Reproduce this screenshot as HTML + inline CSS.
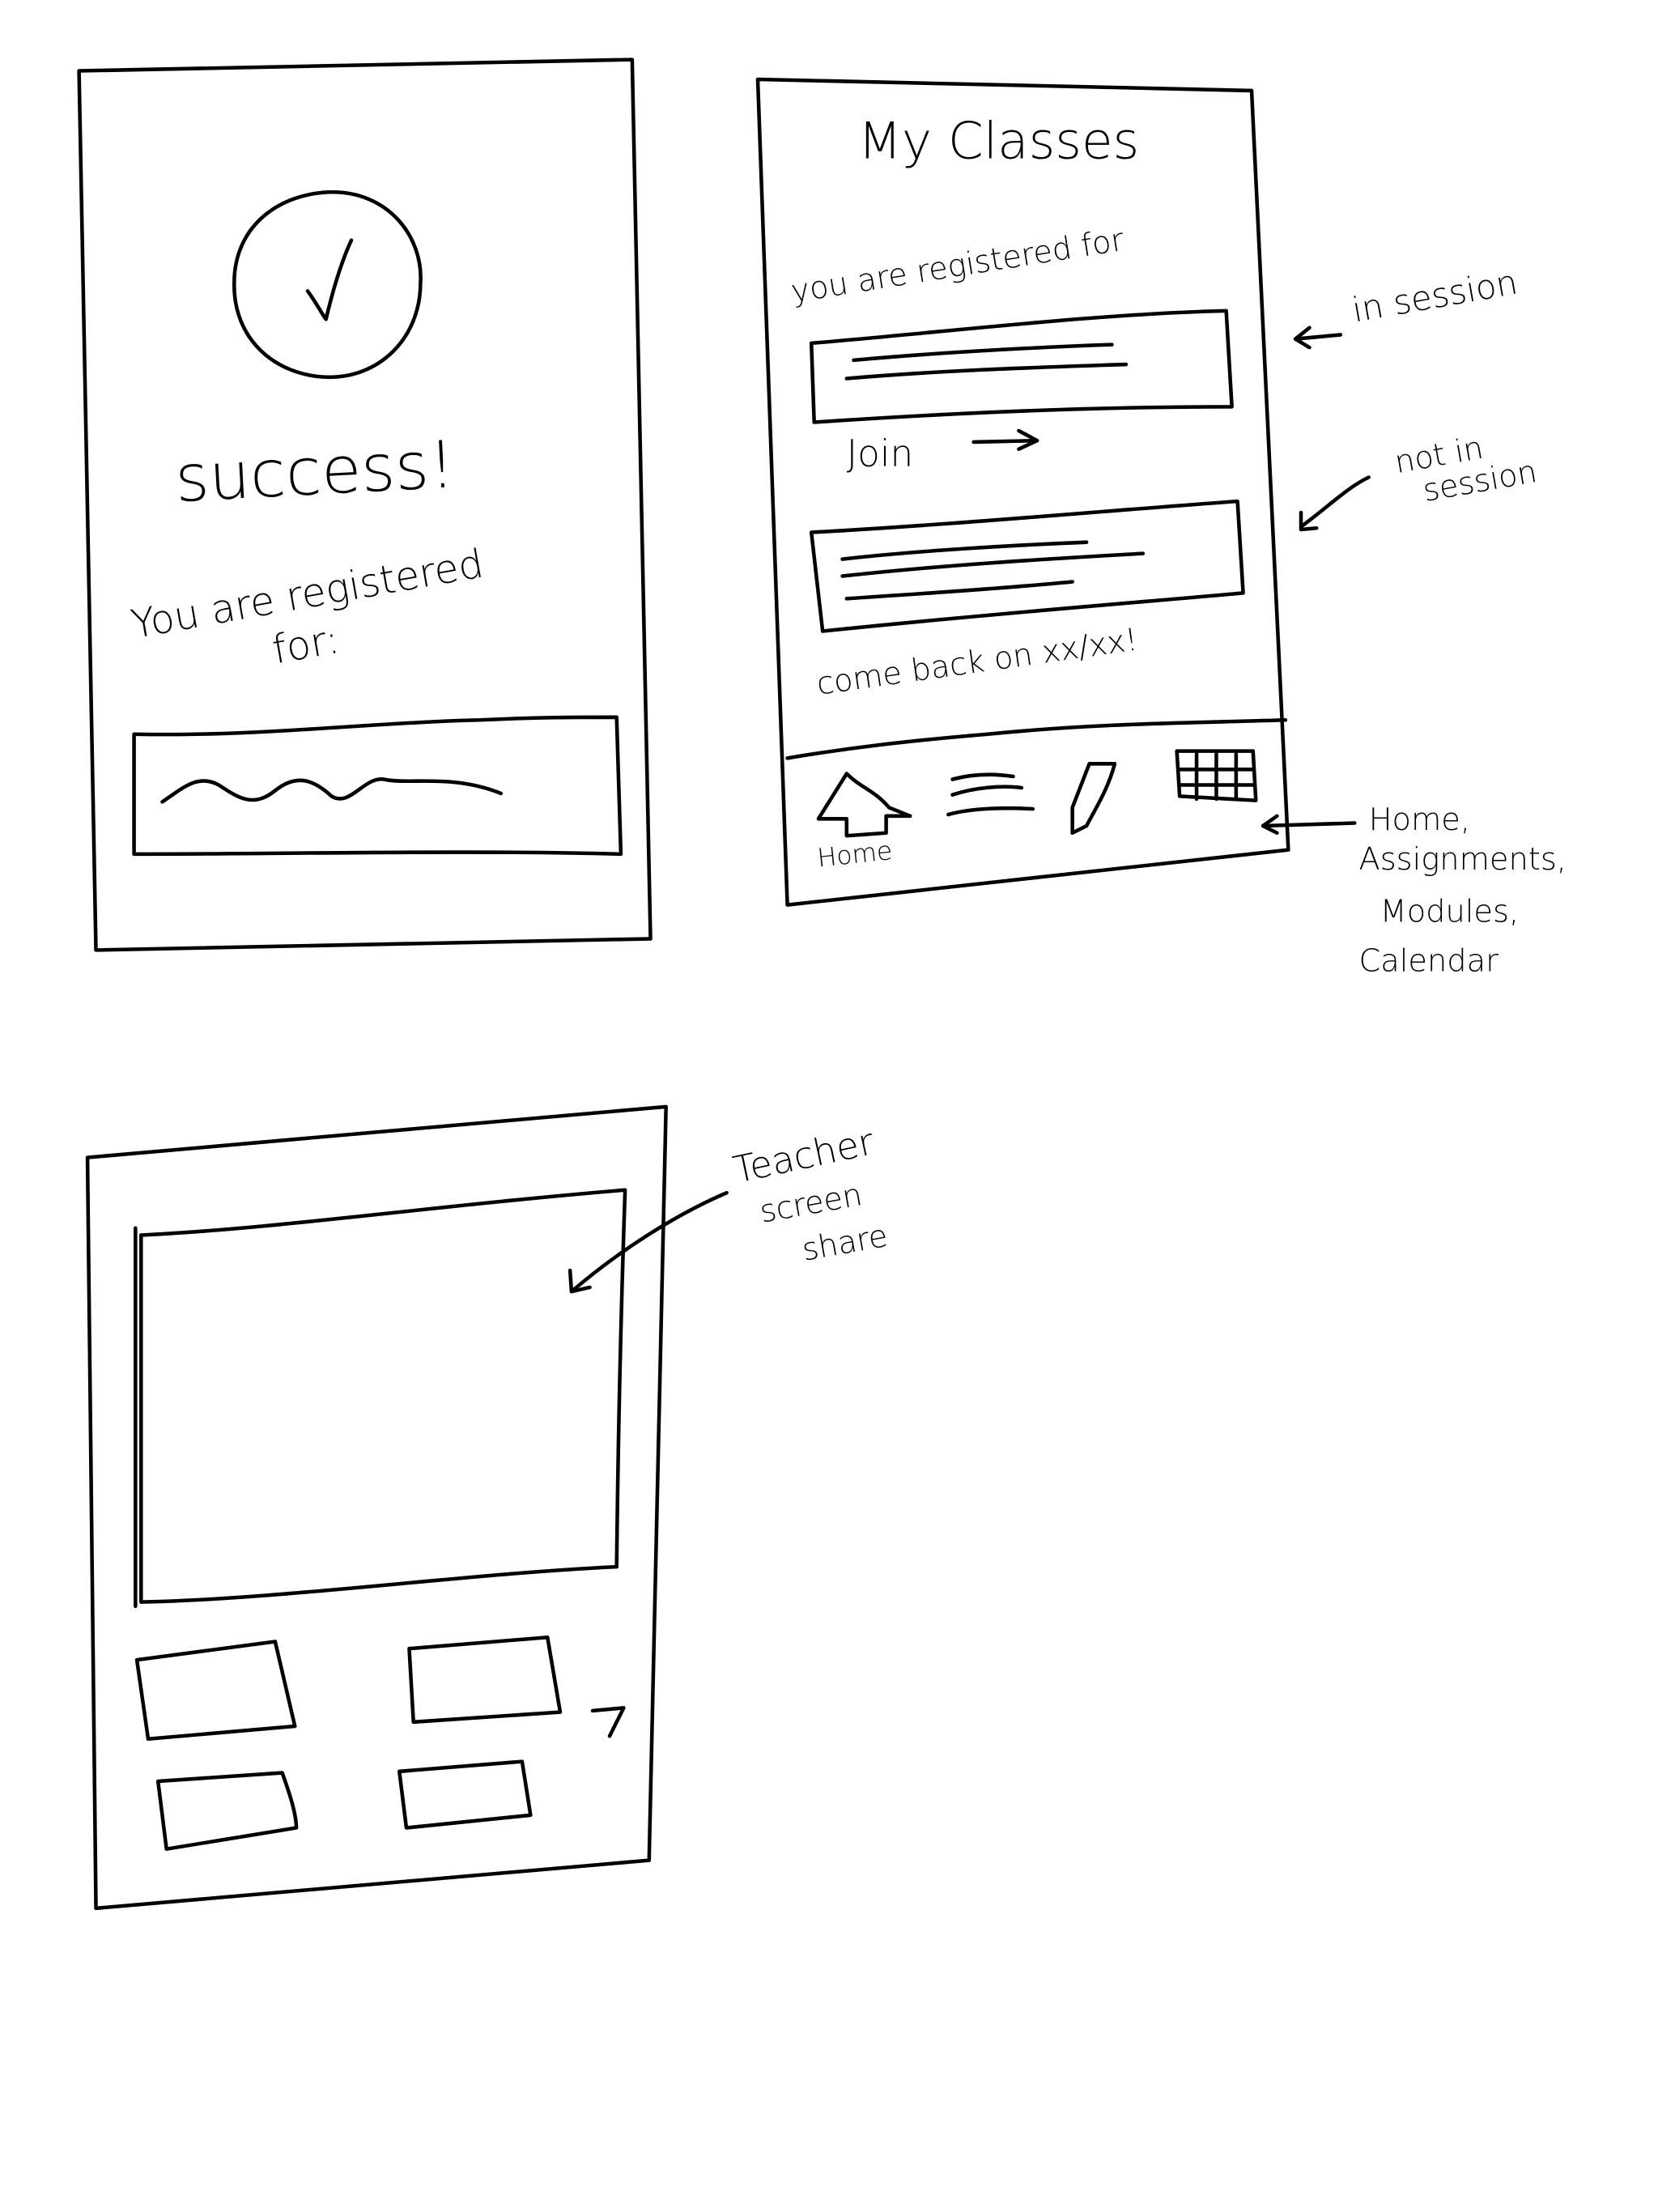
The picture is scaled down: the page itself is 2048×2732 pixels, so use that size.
<!DOCTYPE html>
<html><head><meta charset="utf-8"><style>
html,body{margin:0;padding:0;background:#fff;width:2048px;height:2732px;overflow:hidden}
svg{display:block}
text{font-family:"DejaVu Sans","Liberation Sans",sans-serif;font-weight:200;fill:#000}
</style></head><body>
<svg width="2048" height="2732" viewBox="0 0 1175 1567" xmlns="http://www.w3.org/2000/svg">
<g fill="none" stroke="#000" stroke-width="2.6" stroke-linecap="round" stroke-linejoin="round">
<polygon points="56,50 448,42 461,665 68,673"/>
<path d="M232,136 C275,134 300,168 298,200 C298,240 268,268 232,267 C195,266 165,240 166,200 C166,162 195,138 232,136 Z"/>
<path d="M218,206 C224,214 228,222 231,226 C236,205 242,185 249,170"/>
<path d="M95,520 C180,522 260,512 340,510 C380,508 410,508 437,508 L440,605 C330,602 200,605 95,605 Z M95,520 L95,605"/>
<path d="M115,568 C130,558 140,548 155,556 C170,566 180,572 195,560 C210,548 222,552 235,564 C248,572 258,550 272,552 C290,556 320,548 355,562"/>
<polygon points="537,56 887,64 913,602 558,641"/>
<path d="M575,243 C670,235 780,222 869,220 L873,288 C780,288 680,292 577,299 Z"/>
<path d="M605,255 C660,250 730,246 788,244 M600,268 C670,262 740,260 798,258"/>
<path d="M575,377 C670,372 780,362 877,355 L881,420 C790,428 690,436 583,447 Z"/>
<path d="M597,396 C650,390 720,386 770,384 M597,408 C670,400 740,396 810,392 M600,424 C660,420 720,416 760,412"/>
<path d="M690,313 L735,312 M722,305 L735,312 L722,318"/>
<path d="M558,537 C600,530 640,525 700,520 C780,512 850,512 911,510"/>
<path d="M600,548 C610,558 620,560 630,572 L645,578 L628,578 L628,590 L600,592 L600,580 L580,580 Z"/>
<path d="M675,552 C690,548 705,548 718,550 M675,563 C690,558 710,556 724,558 M672,577 C690,572 715,572 732,573"/>
<path d="M772,541 L790,541 C785,560 775,575 770,585 L760,590 L760,572 Z"/>
<path d="M834,532 L888,532 L890,567 L836,564 Z M836,545 L888,545 M836,556 L888,556 M848,534 L848,566 M862,534 L862,566 M876,534 L876,566"/>
<path d="M918,240 L950,237 M928,232 L918,240 L928,246"/>
<path d="M922,373 C940,360 955,345 970,338 M922,363 L922,375 L933,374"/>
<path d="M895,585 L960,583 M905,578 L895,585 L905,590"/>
<polygon points="62,820 472,784 460,1318 68,1352"/>
<path d="M100,875 C200,870 300,855 443,843 C440,930 438,1020 437,1110 C330,1115 200,1133 100,1135 Z M96,870 L96,1138"/>
<path d="M97,1176 L195,1163 L209,1223 L105,1232 Z"/>
<path d="M290,1168 L388,1160 L397,1213 L293,1220 Z"/>
<path d="M112,1262 L200,1256 C205,1270 210,1285 210,1295 L118,1310 Z"/>
<path d="M283,1255 L370,1248 L376,1286 L288,1295 Z"/>
<path d="M420,1212 L442,1210 L432,1230"/>
<path d="M405,915 C440,885 480,860 515,845 M404,900 L405,915 L418,912"/>
</g>
<text x="125" y="355" font-size="46" transform="rotate(-3 125 355)">success!</text>
<text x="95" y="452" font-size="28" transform="rotate(-10 95 452)">You are registered</text>
<text x="195" y="470" font-size="28" transform="rotate(-10 195 470)">for:</text>
<text x="608" y="112" font-size="36">My Classes</text>
<text x="562" y="214" font-size="22" transform="rotate(-9 562 214)">you are registered for</text>
<text x="600" y="330" font-size="26">Join</text>
<text x="580" y="492" font-size="22" transform="rotate(-8 580 492)">come back on xx/xx!</text>
<text x="580" y="614" font-size="18" transform="rotate(-6 580 614)">Home</text>
<text x="960" y="228" font-size="24" transform="rotate(-10 960 228)">in session</text>
<text x="990" y="335" font-size="22" transform="rotate(-10 990 335)">not in</text>
<text x="1010" y="355" font-size="22" transform="rotate(-10 1010 355)">session</text>
<text x="970" y="588" font-size="22">Home,</text>
<text x="963" y="616" font-size="22">Assignments,</text>
<text x="978" y="653" font-size="22">Modules,</text>
<text x="963" y="688" font-size="22">Calendar</text>
<text x="522" y="838" font-size="26" transform="rotate(-12 522 838)">Teacher</text>
<text x="540" y="866" font-size="22" transform="rotate(-10 540 866)">screen</text>
<text x="570" y="893" font-size="22" transform="rotate(-10 570 893)">share</text>
</svg>
</body></html>
